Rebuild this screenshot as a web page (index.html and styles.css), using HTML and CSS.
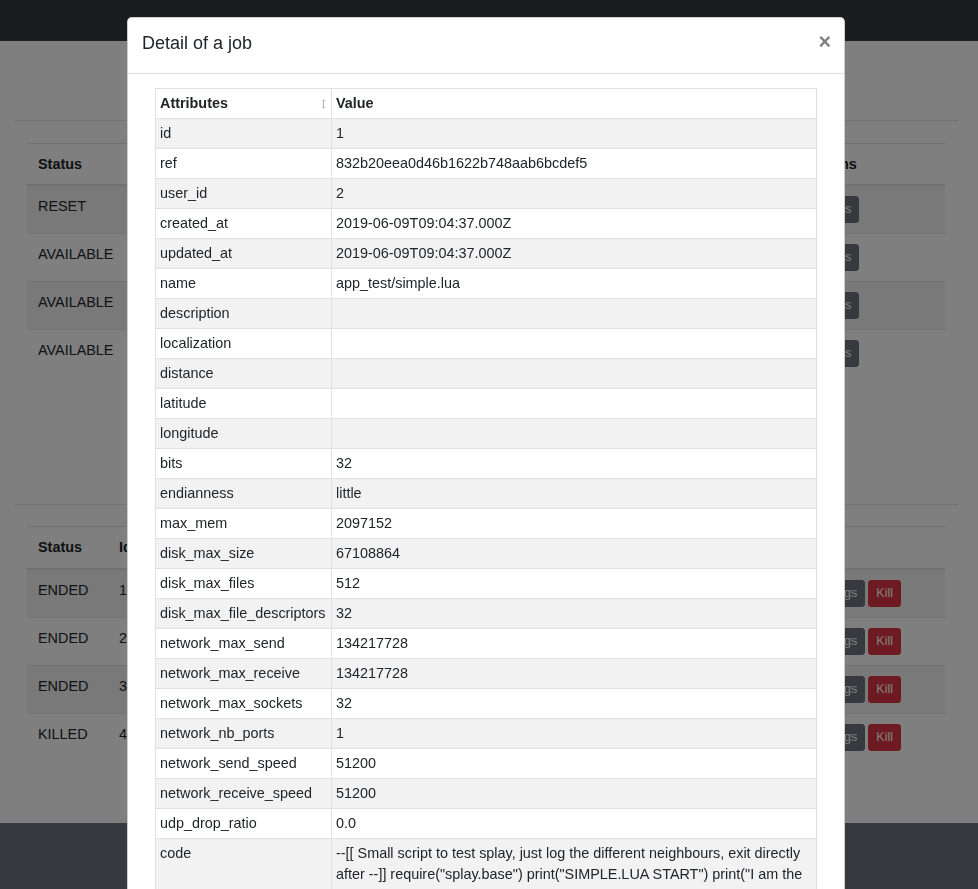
FILE: index.html
```html
<!DOCTYPE html>
<html lang="en">
<head>
<meta charset="utf-8">
<title>Jobs</title>
<link rel="stylesheet" href="styles.css">
</head>
<body>
<div class="page">
  <nav class="navbar"></nav>
  <main class="main">
    <div class="rule"></div>
    <table class="jobs">
      <colgroup><col class="c-status"><col class="c-mid-top"><col class="c-act-top"></colgroup>
      <thead><tr><th>Status</th><th></th><th>Actions</th></tr></thead>
      <tbody>
        <tr><td>RESET</td><td></td><td><div class="actions shift"><button class="btn btn-secondary">Logs</button></div></td></tr>
        <tr><td>AVAILABLE</td><td></td><td><div class="actions shift"><button class="btn btn-secondary">Logs</button></div></td></tr>
        <tr><td>AVAILABLE</td><td></td><td><div class="actions shift"><button class="btn btn-secondary">Logs</button></div></td></tr>
        <tr><td>AVAILABLE</td><td></td><td><div class="actions shift"><button class="btn btn-secondary">Logs</button></div></td></tr>
      </tbody>
    </table>
    <div class="rule rule-second"></div>
    <table class="jobs jobs-second">
      <colgroup><col class="c-status2"><col class="c-mid-bottom"><col class="c-act-bottom"></colgroup>
      <thead><tr><th>Status</th><th>Id</th><th></th></tr></thead>
      <tbody>
        <tr><td>ENDED</td><td>1</td><td><div class="actions"><button class="btn btn-secondary">Logs</button><button class="btn btn-danger">Kill</button></div></td></tr>
        <tr><td>ENDED</td><td>2</td><td><div class="actions"><button class="btn btn-secondary">Logs</button><button class="btn btn-danger">Kill</button></div></td></tr>
        <tr><td>ENDED</td><td>3</td><td><div class="actions"><button class="btn btn-secondary">Logs</button><button class="btn btn-danger">Kill</button></div></td></tr>
        <tr><td>KILLED</td><td>4</td><td><div class="actions"><button class="btn btn-secondary">Logs</button><button class="btn btn-danger">Kill</button></div></td></tr>
      </tbody>
    </table>
  </main>
  <footer class="footer"></footer>
</div>

<div class="backdrop"></div>

<div class="modal" role="dialog">
  <div class="modal-header">
    <h5 class="modal-title">Detail of a job</h5>
    <button class="close" aria-label="Close">×</button>
  </div>
  <div class="modal-body">
    <table class="detail">
      <colgroup><col class="d-attr"><col class="d-val"></colgroup>
      <thead>
        <tr>
          <th class="sortable">Attributes
            <svg class="sort-icon" width="5" height="10" viewBox="0 0 5 10" aria-hidden="true">
              <path d="M2.5 0.8 V9.2 M0.8 2.4 L2.5 0.8 L4.2 2.4 M0.8 7.6 L2.5 9.2 L4.2 7.6" fill="none" stroke="currentColor" stroke-width="0.9"/>
            </svg>
          </th>
          <th>Value</th>
        </tr>
      </thead>
      <tbody>
        <tr><td>id</td><td>1</td></tr>
        <tr><td>ref</td><td>832b20eea0d46b1622b748aab6bcdef5</td></tr>
        <tr><td>user_id</td><td>2</td></tr>
        <tr><td>created_at</td><td>2019-06-09T09:04:37.000Z</td></tr>
        <tr><td>updated_at</td><td>2019-06-09T09:04:37.000Z</td></tr>
        <tr><td>name</td><td>app_test/simple.lua</td></tr>
        <tr><td>description</td><td></td></tr>
        <tr><td>localization</td><td></td></tr>
        <tr><td>distance</td><td></td></tr>
        <tr><td>latitude</td><td></td></tr>
        <tr><td>longitude</td><td></td></tr>
        <tr><td>bits</td><td>32</td></tr>
        <tr><td>endianness</td><td>little</td></tr>
        <tr><td>max_mem</td><td>2097152</td></tr>
        <tr><td>disk_max_size</td><td>67108864</td></tr>
        <tr><td>disk_max_files</td><td>512</td></tr>
        <tr><td>disk_max_file_descriptors</td><td>32</td></tr>
        <tr><td>network_max_send</td><td>134217728</td></tr>
        <tr><td>network_max_receive</td><td>134217728</td></tr>
        <tr><td>network_max_sockets</td><td>32</td></tr>
        <tr><td>network_nb_ports</td><td>1</td></tr>
        <tr><td>network_send_speed</td><td>51200</td></tr>
        <tr><td>network_receive_speed</td><td>51200</td></tr>
        <tr><td>udp_drop_ratio</td><td>0.0</td></tr>
        <tr><td>code</td><td>--[[ Small script to test splay, just log the different neighbours, exit directly after --]] require("splay.base") print("SIMPLE.LUA START") print("I am the node "..job.position.." of "..#job.nodes) for _, n in pairs(job.nodes) do print(n.ip..":"..n.port) end print("SIMPLE.LUA END") os.exit()</td></tr>
      </tbody>
    </table>
  </div>
</div>
</body>
</html>
```

FILE: styles.css
```css
* { box-sizing: border-box; }

html, body {
  margin: 0;
  padding: 0;
  height: 100%;
  overflow: hidden;
}

body {
  font-family: "Liberation Sans", Arial, Helvetica, sans-serif;
  font-size: 14.4px;
  line-height: 1.5;
  color: #212529;
  background: #fff;
}

/* ---------- background page ---------- */
.page {
  display: flex;
  flex-direction: column;
  min-height: 889px;
}

.navbar {
  height: 41px;
  background: #343a40;
}

.main {
  height: 782px;
  padding-top: 79px;
}

.rule {
  margin-left: 13px;
  width: 946px;
  border-top: 1px solid rgba(0, 0, 0, 0.1);
}

.rule-second {
  margin-top: 127px;
}

.jobs {
  margin: 22px 0 0 27px;
  width: 918px;
  table-layout: fixed;
  border-collapse: separate;
  border-spacing: 0;
}

.jobs-second {
  margin-top: 21px;
}

.c-status { width: 100px; }
.c-mid-top { width: 666px; }
.c-act-top { width: 152px; }
.c-status2 { width: 81px; }
.c-mid-bottom { width: 703px; }
.c-act-bottom { width: 134px; }

.jobs th,
.jobs td {
  text-align: left;
  vertical-align: top;
  padding: 10px 11px 6px;
  line-height: 21.6px;
}

.jobs th {
  font-weight: 700;
  border-top: 1px solid #dee2e6;
  border-bottom: 1px solid #dee2e6;
  padding-bottom: 8.4px;
}

.jobs-second th {
  padding-bottom: 9px;
}

.jobs td {
  border-top: 1px solid #dee2e6;
}

.jobs tbody tr:nth-child(odd) td {
  background: rgba(0, 0, 0, 0.05);
}

.actions {
  display: flex;
  gap: 3px;
  margin: 0 0 4px;
}

.actions.shift {
  margin-left: 12px;
}

.btn {
  font-family: inherit;
  font-size: 12.6px;
  line-height: 19px;
  padding: 3px 7px;
  border: 1px solid transparent;
  border-radius: 3px;
  color: #fff;
  cursor: pointer;
}

.btn-secondary {
  background: #6c757d;
  border-color: #6c757d;
}

.btn-danger {
  background: #dc3545;
  border-color: #dc3545;
}

.footer {
  flex: 1;
  background: #6c757d;
}

/* ---------- modal ---------- */
.backdrop {
  position: fixed;
  inset: 0;
  background: rgba(0, 0, 0, 0.5);
}

.modal {
  position: fixed;
  left: 127px;
  top: 17px;
  width: 718px;
  background: #fff;
  border: 1px solid rgba(0, 0, 0, 0.2);
  border-radius: 4.8px;
}

.modal-header {
  display: flex;
  align-items: flex-start;
  justify-content: space-between;
  padding: 12px 13px 17px 14px;
  border-bottom: 1px solid #dee2e6;
}

.modal-title {
  margin: 0;
  font-size: 18px;
  font-weight: 400;
  line-height: 26px;
  color: #212529;
}

.close {
  margin: 1px 0 0;
  padding: 0;
  background: transparent;
  border: 0;
  font-family: inherit;
  font-size: 21.6px;
  font-weight: 700;
  line-height: 1;
  color: #000;
  opacity: 0.5;
  text-shadow: 0 1px 0 #fff;
  cursor: pointer;
}

.modal-body {
  padding: 14px 27px;
}

.detail {
  width: 661px;
  table-layout: fixed;
  border-collapse: collapse;
  font-size: 14.4px;
  line-height: 21px;
  color: #212529;
}

.d-attr { width: 176px; }
.d-val { width: 485px; }

.detail th,
.detail td {
  border: 1px solid #dee2e6;
  padding: 4px;
  text-align: left;
  vertical-align: top;
}

.detail th {
  font-weight: 700;
}

.detail tbody tr:nth-child(odd) td {
  background: #f2f2f2;
}

.sortable {
  position: relative;
}

.sort-icon {
  position: absolute;
  right: 5px;
  top: 10px;
  color: #b8b8b8;
}
```
